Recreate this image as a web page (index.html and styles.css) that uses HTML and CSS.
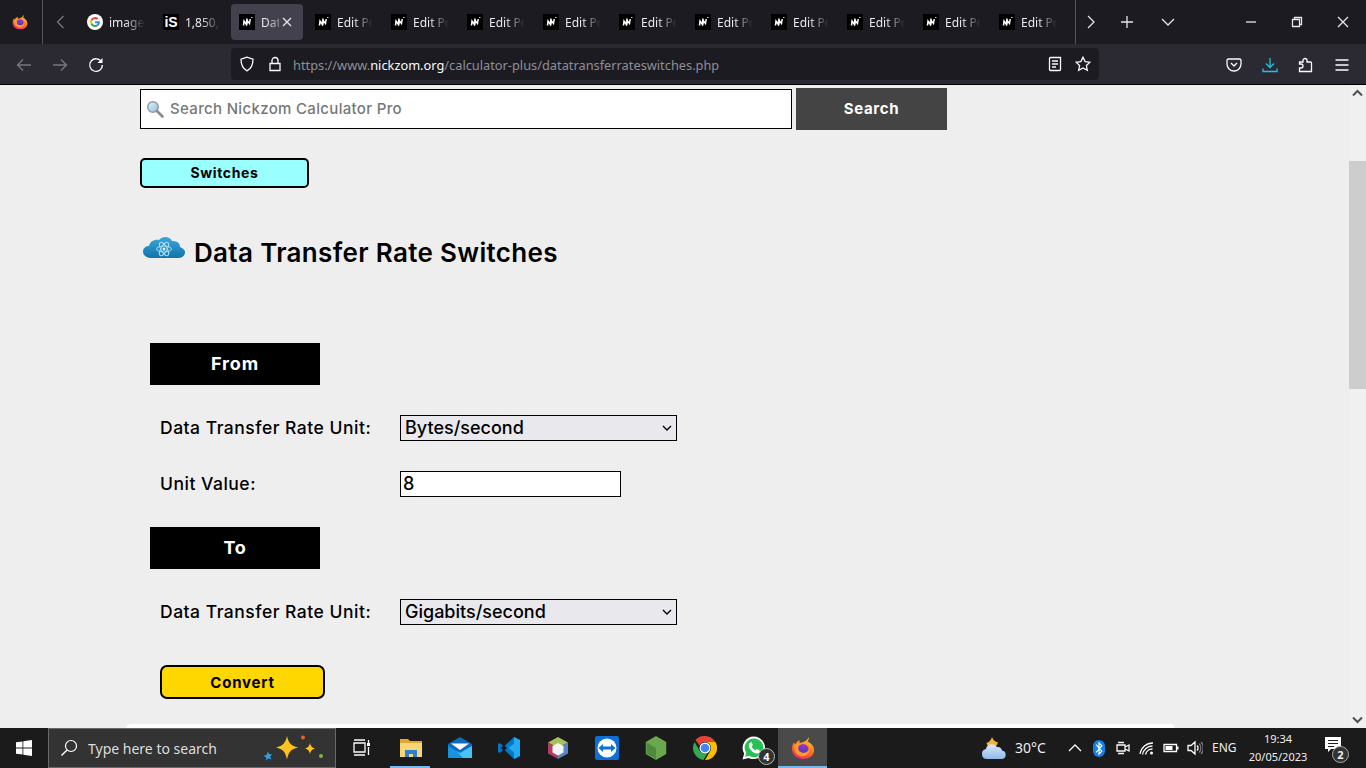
FILE: index.html
```html
<!DOCTYPE html>
<html lang="en">
<head>
<meta charset="utf-8">
<title>Data Transfer Rate Switches</title>
<link rel="stylesheet" href="styles.css">
</head>
<body>
<svg class="defs" aria-hidden="true">
  <defs>
    <linearGradient id="ffg" x1="0.7" y1="0" x2="0.3" y2="1"><stop offset="0" stop-color="#ffcb2e"/><stop offset="0.5" stop-color="#ff7a1f"/><stop offset="1" stop-color="#f2246b"/></linearGradient>
    <linearGradient id="ffp" x1="0.5" y1="0" x2="0.5" y2="1"><stop offset="0" stop-color="#8b3fd6"/><stop offset="1" stop-color="#5a2bb0"/></linearGradient>
    <linearGradient id="cloudg" x1="0" y1="0" x2="0" y2="1"><stop offset="0" stop-color="#3aa8dc"/><stop offset="1" stop-color="#1273ab"/></linearGradient>
    <linearGradient id="wxg" x1="0" y1="0" x2="0" y2="1"><stop offset="0" stop-color="#dbeafa"/><stop offset="1" stop-color="#8fb9ea"/></linearGradient>
    <linearGradient id="magg" x1="0" y1="0" x2="1" y2="1"><stop offset="0" stop-color="#e5f3fb"/><stop offset="1" stop-color="#8fbfdc"/></linearGradient>
    <symbol id="firefox" viewBox="0 0 24 24">
      <path fill="url(#ffg)" d="M17.500 1c.6 2.200-.1 3.600-1 4.600 3.300 1.200 6 4 6.500 7.400.8 5.700-3.900 10-10.800 10C5.700 23 1 18.600 1 12.600 1 10 1.900 7.700 3 6.300c.2 1.100.7 1.800 1.300 2.200C5 6.300 7 4.700 9 4.600c-.5.800-.7 1.500-.6 2.200C11 6.600 16.500 5.500 17.500 1z"/>
      <circle cx="12" cy="13.500" r="5.500" fill="url(#ffp)"/>
      <path fill="#ff9a2a" d="M3.500 9.500c2-2.300 5-3 7.500-1.500-2.200.3-3.500 1.500-3.800 3.500-.3 2.800 2 5.300 5.300 5.300 3 0 5.300-2 5.700-4.500 1 4.300-2.400 8.200-6.700 8.200-5 0-9.500-5-8-11z"/>
    </symbol>
    <symbol id="nz" viewBox="0 0 16 16">
      <rect width="16" height="16" fill="#000"/>
      <path fill="none" stroke="#fff" stroke-width="1.500" d="M4.500 11.500 5 7l2.200 3.200L8 4.500"/>
      <path fill="none" stroke="#fff" stroke-width="1.500" d="M7.500 11.500 8.500 7l2 2.500.7-4.500"/>
      <path fill="none" stroke="#ccc" stroke-width="1" d="M12 3.500h1.500"/>
    </symbol>
  </defs>
</svg>

<header class="chrome">
  <div class="tabbar">
    <div class="slot slot-ff"><svg class="i16"><use href="#firefox"/></svg></div>
    <div class="slot slot-back"><svg class="i16" viewBox="0 0 16 16"><path class="st dim" d="M10.500 2 4.500 8l6 6"/></svg></div>
    <div class="tabs">
      <div class="tab">
        <svg class="i16" viewBox="0 0 24 24"><circle cx="12" cy="12" r="12" fill="#fff"/><path fill="#ea4335" d="M12 7.500c1.100 0 2.100.4 2.900 1.100l2.100-2.100A7.500 7.500 0 0 0 5.300 8.700l2.500 1.900A4.500 4.500 0 0 1 12 7.500z"/><path fill="#fbbc05" d="M7.500 12c0-.5.100-.9.300-1.400L5.300 8.700a7.500 7.500 0 0 0 0 6.600l2.500-1.900c-.2-.5-.3-.9-.3-1.400z"/><path fill="#34a853" d="M12 16.500a4.500 4.500 0 0 1-4.200-3.100l-2.500 1.900A7.500 7.500 0 0 0 17 17.600l-2.400-1.900c-.7.500-1.600.8-2.600.8z"/><path fill="#4285f4" d="M19.300 10.800H12v3h4.200c-.3 1-.8 1.500-1.600 1.900l2.400 1.900c1.500-1.400 2.500-3.500 2.500-5.600 0-.4-.1-.8-.2-1.200z"/></svg>
        <span class="tab-t">image</span>
      </div>
      <div class="tab">
        <span class="is">iS</span>
        <span class="tab-t">1,850,5</span>
      </div>
      <div class="tab active">
        <svg class="i16"><use href="#nz"/></svg>
        <span class="tab-t short">Dat</span>
        <svg class="tab-x" viewBox="0 0 10 10"><path class="st" d="M1 1l8 8M9 1 1 9"/></svg>
      </div>
      <div class="tab"><svg class="i16"><use href="#nz"/></svg><span class="tab-t">Edit Po</span></div>
      <div class="tab"><svg class="i16"><use href="#nz"/></svg><span class="tab-t">Edit Po</span></div>
      <div class="tab"><svg class="i16"><use href="#nz"/></svg><span class="tab-t">Edit Po</span></div>
      <div class="tab"><svg class="i16"><use href="#nz"/></svg><span class="tab-t">Edit Po</span></div>
      <div class="tab"><svg class="i16"><use href="#nz"/></svg><span class="tab-t">Edit Po</span></div>
      <div class="tab"><svg class="i16"><use href="#nz"/></svg><span class="tab-t">Edit Po</span></div>
      <div class="tab"><svg class="i16"><use href="#nz"/></svg><span class="tab-t">Edit Po</span></div>
      <div class="tab"><svg class="i16"><use href="#nz"/></svg><span class="tab-t">Edit Po</span></div>
      <div class="tab"><svg class="i16"><use href="#nz"/></svg><span class="tab-t">Edit Po</span></div>
      <div class="tab"><svg class="i16"><use href="#nz"/></svg><span class="tab-t">Edit Po</span></div>
    </div>
    <div class="tab-end">
      <div class="slot w30"><svg class="i16" viewBox="0 0 16 16"><path class="st" d="M5 2l6 6-6 6"/></svg></div>
      <div class="slot w42"><svg class="i16" viewBox="0 0 16 16"><path class="st" d="M8 2v12M2 8h12"/></svg></div>
      <div class="slot w40"><svg class="i16" viewBox="0 0 16 16"><path class="st" d="M2 5l6 6 6-6"/></svg></div>
    </div>
    <div class="win">
      <div class="slot w46"><svg class="i12" viewBox="0 0 12 12"><path class="st" d="M1 6h10"/></svg></div>
      <div class="slot w46"><svg class="i12" viewBox="0 0 12 12"><path class="st" d="M1.500 3.500h7v7h-7zM3.500 3.500v-2h7v7h-2"/></svg></div>
      <div class="slot w46"><svg class="i12" viewBox="0 0 12 12"><path class="st" d="M1 1l10 10M11 1 1 11"/></svg></div>
    </div>
  </div>
  <div class="toolbar">
    <div class="slot w36 first"><svg class="i16" viewBox="0 0 16 16"><path class="st dim" d="M15 8H1.500M7 2.500 1.500 8 7 13.500"/></svg></div>
    <div class="slot w36"><svg class="i16" viewBox="0 0 16 16"><path class="st dim" d="M1 8h13.500M9 2.500 14.500 8 9 13.500"/></svg></div>
    <div class="slot w36"><svg class="i16" viewBox="0 0 16 16"><path class="st bright" d="M13.500 5A6.300 6.300 0 1 0 14.300 8"/><path fill="#fbfbfe" d="M14.500 1v5h-5z"/></svg></div>
    <div class="urlbar">
      <svg class="i16 shield" viewBox="0 0 16 16"><path class="st bright" d="M8 1.200 2 3.200c0 5.300 1.500 9.300 6 11.600 4.500-2.300 6-6.300 6-11.600z"/></svg>
      <svg class="i16 lock" viewBox="0 0 16 16"><path class="st bright" d="M3 7.500h10v7H3zM5 7.500V4.500a3 3 0 0 1 6 0v3"/></svg>
      <div class="url"><span class="url-dim">https://www.</span><span class="url-host">nickzom.org</span><span class="url-dim">/calculator-plus/datatransferrateswitches.php</span></div>
      <svg class="i16" viewBox="0 0 16 16"><path class="st bright" d="M3.500 1.500h10v12a1 1 0 0 1-1 1h-9a1 1 0 0 1-1-1v-11a1 1 0 0 1 1-1zM5 5h6M5 8h6M5 11h4"/></svg>
      <svg class="i16 star" viewBox="0 0 16 16"><path class="st bright" d="M8 1.200l2.100 4.400 4.800.6-3.500 3.300.9 4.800L8 12l-4.300 2.300.9-4.800L1.100 6.200l4.800-.6z"/></svg>
    </div>
    <div class="tools">
      <div class="slot w36"><svg class="i16" viewBox="0 0 16 16"><path class="st bright" d="M2.500 2h11A1.500 1.500 0 0 1 15 3.500V7A7 7 0 0 1 1 7V3.500A1.500 1.500 0 0 1 2.500 2zM5 6l3 3 3-3"/></svg></div>
      <div class="slot w36"><svg class="i16" viewBox="0 0 16 16"><path class="st blue" d="M8 1v9M4 6.500 8 10.500l4-4M1 11.500v3h14v-3"/></svg></div>
      <div class="slot w36"><svg class="i16" viewBox="0 0 16 16"><path class="st bright" d="M7 1.500a2 2 0 0 1 2 2V5h3.500a1 1 0 0 1 1 1v8.500h-12V11H3a2 2 0 0 0 0-4H1.500V5H5V3.500a2 2 0 0 1 2-2z"/></svg></div>
      <div class="slot w36"><svg class="i16" viewBox="0 0 16 16"><path class="st bright" d="M1.500 3h13M1.500 8h13M1.500 13h13"/></svg></div>
    </div>
  </div>
</header>

<div class="viewport">
  <main class="page">
    <form class="search-row">
      <div class="search-box">
        <svg class="mag" viewBox="0 0 18 18"><circle cx="7" cy="7" r="5.300" fill="url(#magg)" stroke="#8b9aa5" stroke-width="1.400"/><path d="M11 11l5.500 5.500" stroke="#8a8a8a" stroke-width="2.600" stroke-linecap="round"/></svg>
        <span class="search-ph">Search Nickzom Calculator Pro</span>
      </div>
      <div class="search-btn">Search</div>
    </form>
    <div class="switch-btn">Switches</div>
    <div class="title-row">
      <svg class="cloud" viewBox="0 0 42 30">
        <path fill="url(#cloudg)" d="M8 25C3 25 0 22 0 18.500S3 13 6 13c1-5 6-7 10-6 3-4 11-4 13 1 5 0 8 2 8 6 3 1 5 3 5 5 0 4-3 6-7 6z"/>
        <g fill="none" stroke="#a9dcf2" stroke-width="1"><ellipse cx="21" cy="16" rx="7.500" ry="3"/><ellipse cx="21" cy="16" rx="7.500" ry="3" transform="rotate(60 21 16)"/><ellipse cx="21" cy="16" rx="7.500" ry="3" transform="rotate(120 21 16)"/></g>
        <circle cx="21" cy="16" r="1.500" fill="#d5effa"/>
      </svg>
      <h1 class="title">Data Transfer Rate Switches</h1>
    </div>
    <div class="bar bar-from">From</div>
    <div class="field field-a">
      <label class="lbl" for="fromUnit">Data Transfer Rate Unit:</label>
      <select class="sel" id="fromUnit"><option>Bytes/second</option></select>
    </div>
    <div class="field field-b">
      <label class="lbl" for="val">Unit Value:</label>
      <input class="inp" id="val" type="text" value="8">
    </div>
    <div class="bar bar-to">To</div>
    <div class="field field-a">
      <label class="lbl" for="toUnit">Data Transfer Rate Unit:</label>
      <select class="sel" id="toUnit"><option>Gigabits/second</option></select>
    </div>
    <div class="convert">Convert</div>
    <div class="card"></div>
  </main>
  <aside class="scrollbar">
    <svg class="sb-arrow" viewBox="0 0 17 17"><path d="M4 10.500 8.500 6l4.500 4.500" fill="none" stroke="#505050" stroke-width="2"/></svg>
    <div class="sb-track"><div class="sb-thumb"></div></div>
    <svg class="sb-arrow" viewBox="0 0 17 17"><path d="M4 6.500 8.500 11 13 6.500" fill="none" stroke="#505050" stroke-width="2"/></svg>
  </aside>
</div>

<footer class="taskbar">
  <div class="tb-start"><svg class="i16" viewBox="0 0 16 16"><path fill="#fff" d="M0 2.300 6.500 1.400v6.200H0zM7.300 1.300 16 0v7.600H7.300zM0 8.400h6.500v6.200L0 13.700zM7.300 8.400H16V16l-8.700-1.300z"/></svg></div>
  <div class="tb-search">
    <svg class="tb-mag" viewBox="0 0 18 18"><circle cx="11" cy="7" r="5.500" fill="none" stroke="#fff" stroke-width="1.200"/><path d="M7 11l-5.500 5.500" stroke="#fff" stroke-width="1.400"/></svg>
    <span class="tb-search-t">Type here to search</span>
    <svg class="spark" viewBox="0 0 62 28">
      <path fill="#ffc21a" d="M24 2c1.500 7 4 10 11 11.500C28 15 25.500 18 24 25.500 22.500 18 20 15 13 13.500 20 12 22.500 9 24 2z"/>
      <path fill="#ffc21a" d="M47 9c.6 3 1.800 4.500 5 5.500-3.200 1-4.400 2.500-5 5.500-.6-3-1.800-4.500-5-5.500 3.200-1 4.400-2.500 5-5.500z"/>
      <circle cx="40" cy="3.500" r="2" fill="#e8622c"/>
      <circle cx="58" cy="22" r="2" fill="#7cb53a"/>
      <path fill="#2f9fe6" d="M5 17.500l1 2.800 3-.3-1.800 2.400 1.200 3-3-1-2.300 2 .2-3L.5 21.800l2.900-.8z"/>
    </svg>
  </div>
  <div class="tb-icons">
    <div class="tb-i tb-view"><svg class="i20" viewBox="0 0 20 20"><path class="st bright" d="M3 5h11v9H3zM3 2h11M3 17h11M17.500 2v3M17.500 9v8"/><rect x="16" y="5" width="3" height="3" fill="#fff"/></svg></div>
    <div class="tb-i on"><svg class="i24" viewBox="0 0 24 24"><path fill="#e3a72c" d="M1 3h8l2 2h12v5H1z"/><path fill="#f7d775" d="M1 7h22v14H1z"/><path fill="#2d7fd3" d="M6 21v-7h12v7h-4v-3h-4v3z"/></svg></div>
    <div class="tb-i"><svg class="i24" viewBox="0 0 24 24"><path fill="#0c6cc0" d="M12 1 24 8v4L12 19 0 12V8z"/><path fill="#fff" d="M3 7.500h18L12 14z"/><path fill="#1794e0" d="M0 10 12 17 24 10v11a1 1 0 0 1-1 1H1a1 1 0 0 1-1-1z"/><path fill="#45c4f5" d="M24 10v12h-9L8 14.700 12 17z"/></svg></div>
    <div class="tb-i"><svg class="i24" viewBox="0 0 24 24"><path fill="#0078c8" d="M17 1l6 3v16l-6 3-10-9.500L2.500 17 1 16v-8l1.500-1L7 10.500z"/><path fill="#23a9ee" d="M17 1l6 3v16l-6 3V16.500L11.500 12 17 7.500z"/><path fill="#1b1b1b" d="M7 9 3.500 12 7 15l3-3z"/></svg></div>
    <div class="tb-i"><svg class="i24" viewBox="0 0 24 24"><path fill="#a8c15a" d="M12 1l10 5.500L12 12 2 6.500z"/><path fill="#b23c64" d="M2 6.500 12 12v11L2 17.500z"/><path fill="#5586c7" d="M22 6.500 12 12v11l10-5.500z"/><path fill="#f4f4f4" d="M12 7l5.500 3v6.500L12 19.500 6.500 16.500V10z"/></svg></div>
    <div class="tb-i"><svg class="i24" viewBox="0 0 24 24"><rect width="24" height="24" rx="2" fill="#0e6fd8"/><circle cx="12" cy="12" r="9.500" fill="#fff"/><path fill="#0e6fd8" d="M3.500 12 8 8v2.500h8V8l4.500 4-4.500 4v-2.500H8V16z"/></svg></div>
    <div class="tb-i"><svg class="i24" viewBox="0 0 24 24"><path fill="#6aa84f" stroke="#6aa84f" stroke-linejoin="round" stroke-width="1.500" d="M12 1l9.500 5.500v11L12 23l-9.500-5.500v-11z"/><path fill="#4f8a3c" d="M12 23 2.500 17.500v-11L12 12z"/></svg></div>
    <div class="tb-i"><svg class="i24" viewBox="0 0 24 24"><path fill="#ea4335" d="M12 0a12 12 0 0 1 10.400 6H12a6 6 0 0 0-5.500 3.600L2.500 4A12 12 0 0 1 12 0z"/><path fill="#34a853" d="M1.600 6A12 12 0 0 0 10.500 23.900l4-6.900A6 6 0 0 1 6.500 14.500z"/><path fill="#fbbc05" d="M22.400 6H12a6 6 0 0 1 5.200 9L12 24A12 12 0 0 0 22.400 6z"/><circle cx="12" cy="12" r="5.500" fill="#fff"/><circle cx="12" cy="12" r="4.300" fill="#4285f4"/></svg></div>
    <div class="tb-i"><svg class="i24" viewBox="0 0 24 24"><path fill="#fff" d="M12 .5A11.300 11.300 0 0 0 2.200 17.500L.5 23.500l6.200-1.600A11.300 11.300 0 1 0 12 .5z"/><path fill="#25c152" d="M12 2.500a9.300 9.300 0 0 0-7.800 14.300l-1 3.900 4-1A9.300 9.300 0 1 0 12 2.500z"/><path fill="#fff" d="M8.500 6.500c-.5 0-1.700 1-1.700 3 0 3.500 4.500 8 8 8 2 0 3-1.200 3-2l-.2-1.300-2.800-1.300-1.200 1.400c-1.700-.5-3.500-2.300-4-4l1.300-1.200-1.200-2.800z"/></svg><span class="wa-badge">4</span></div>
    <div class="tb-i cur"><svg class="i24"><use href="#firefox"/></svg></div>
  </div>
  <div class="tray">
    <svg class="wx" viewBox="0 0 26 26"><path fill="#f4b43a" d="M11 2c1 3 3 5 6 5.500-1 3-3 5-6 5.500-3-.5-5-2.500-5.500-5C8 7.500 10 5 11 2z"/><path fill="url(#wxg)" d="M6 24a5 5 0 0 1-1-9.900A6 6 0 0 1 16 12a4.500 4.500 0 0 1 5 3.500 4.300 4.300 0 0 1 0 8.500z"/></svg>
    <span class="temp">30°C</span>
    <svg class="i16 caret" viewBox="0 0 16 16"><path class="st bright" d="M2 11l6-6 6 6"/></svg>
    <span class="bt"><svg viewBox="0 0 12 18"><path fill="none" stroke="#fff" stroke-width="1.200" d="M3 5l6 7-3 3V3l3 3-6 7"/></svg></span>
    <svg class="i16 tray-i tray-cam" viewBox="0 0 16 16"><path class="st bright" d="M2 5h8v6H2zM10 7l4-2v6l-4-2M3 2.500h6M3 13.500h6"/></svg>
    <svg class="i16 tray-i" viewBox="0 0 16 16"><path class="st bright" d="M1 14a13 13 0 0 1 13-11M3.500 14.500A10 10 0 0 1 13.500 6M6.500 14.500a7 7 0 0 1 7-5.500"/><circle cx="12.500" cy="13" r="1.500" fill="#fff"/></svg>
    <svg class="i16 tray-i" viewBox="0 0 16 16"><path class="st bright" d="M1 4.500h12.500v7H1z"/><rect x="2.500" y="6" width="7" height="4" fill="#fff"/><rect x="14" y="6.500" width="1.500" height="3" fill="#fff"/></svg>
    <svg class="i16 tray-i" viewBox="0 0 16 16"><path class="st bright" d="M1 5.500h3L8 2v12L4 10.500H1zM10 5.500a3.500 3.500 0 0 1 0 5"/><path class="st dim" d="M12 3.500a6.500 6.500 0 0 1 0 9M14 2a9 9 0 0 1 0 12"/></svg>
    <span class="eng">ENG</span>
    <div class="clock"><span>19:34</span><span>20/05/2023</span></div>
    <div class="notif">
      <svg class="i16" viewBox="0 0 16 16"><path fill="#fff" d="M0 0h16v12H6l-3 3v-3H0z"/><path stroke="#222" d="M3 3.500h10M3 6.500h10M3 9.500h6"/></svg>
      <span class="notif-b">2</span>
    </div>
  </div>
</footer>
</body>
</html>
```
FILE: styles.css
```css
* { box-sizing: border-box; }
html, body { margin: 0; height: 100%; overflow: hidden; }
body {
  width: 1366px; height: 768px; display: flex; flex-direction: column;
  font-family: "Inter", "Liberation Sans", sans-serif; background: #eee;
}
.defs { display: block; width: 0; height: 0; }
svg { display: block; flex: none; }
.st { fill: none; stroke: #e6e6ea; stroke-width: 1.300; }
.st.bright { stroke: #fbfbfe; }
.st.dim { stroke: #77767e; }
.st.blue { stroke: #1fc1f0; }
.i12 { width: 12px; height: 12px; }
.i16 { width: 16px; height: 16px; }
.i20 { width: 20px; height: 20px; }
.i24 { width: 24px; height: 24px; }
.slot { display: flex; align-items: center; justify-content: center; height: 100%; flex: none; }
.w30 { width: 30px; } .w36 { width: 36px; } .w40 { width: 40px; } .w42 { width: 42px; } .w46 { width: 46px; }

/* browser chrome */
.chrome { flex: none; height: 85px; background: #000; }
.tabbar { height: 44px; background: #1c1b22; display: flex; align-items: center; }
.slot-ff { width: 43px; padding-right: 2px; border-right: 1px solid #55545c; }
.slot-back { width: 36px; }
.tabs { display: flex; gap: 4px; width: 997px; height: 36px; overflow: hidden; flex: none; }
.tab { width: 72px; flex: none; height: 36px; display: flex; align-items: center; gap: 6px; padding-left: 8px; color: #e8e8ec; border-radius: 4px; font: 12px/16px "Noto Sans", "Open Sans", sans-serif; }
.tab.active { background: #42414d; }
.tab-t { flex: 1 1 0; min-width: 0; padding-top: 2px; white-space: nowrap; -webkit-mask-image: linear-gradient(90deg, #000 16px, transparent 36px); mask-image: linear-gradient(90deg, #000 16px, transparent 36px); }
.tab-t.short { flex: 0 0 18px; -webkit-mask-image: linear-gradient(90deg, #aaa 5px, rgba(0,0,0,.4) 18px); mask-image: linear-gradient(90deg, #aaa 5px, rgba(0,0,0,.4) 18px); }
.tab-x { width: 10px; height: 10px; flex: none; margin-left: -3px; }
.is { width: 16px; height: 16px; background: #000; color: #fff; font: 700 14px/16px "Liberation Sans", sans-serif; text-align: center; flex: none; }
.tab-end { display: flex; height: 44px; width: 153px; border-left: 1px solid #55545c; margin-left: -1px; flex: none; }
.win { display: flex; height: 44px; flex: none; }
.toolbar { height: 40px; padding-top: 1px; background: #2b2a33; display: flex; align-items: center; }
.first { margin-left: 6px; }
.urlbar { width: 868px; height: 32px; margin-left: 117px; margin-top: -1px; background: #1c1b22; border-radius: 4px; display: flex; align-items: center; padding: 0 8px; flex: none; }
.shield { margin-right: 12px; }
.lock { margin-right: 10px; }
.url { flex: 1; padding-top: 2px; font: 12.800px/20px "Noto Sans", "Open Sans", sans-serif; white-space: nowrap; overflow: hidden; }
.url-dim { color: #8f8f96; }
.url-host { color: #fbfbfe; }
.star { margin-left: 12px; }
.tools { display: flex; height: 39px; margin-left: 117px; }

/* page */
.viewport { flex: 1; min-height: 0; display: flex; background: #eee; }
.page { flex: 1; min-width: 0; padding-left: 140px; padding-top: 3px; overflow: hidden; }
.search-row { display: flex; align-items: center; gap: 4px; }
.search-box { width: 652px; height: 40px; border: 1.500px solid #000; background: #fff; display: flex; align-items: center; padding: 0 0 2px 5px; gap: 6px; }
.mag { width: 18px; height: 18px; margin-top: 2px; }
.search-ph { color: #777; font-size: 15px; font-weight: 500; letter-spacing: .33px; }
.search-btn { width: 151px; height: 42px; padding-bottom: 2px; background: #444; color: #fff; font-size: 15px; font-weight: 700; letter-spacing: .7px; display: flex; align-items: center; justify-content: center; }
.switch-btn { width: 169px; height: 30px; margin-top: 28px; padding-bottom: 2px; border: 2px solid #000; border-radius: 5px; background: #9ff; color: #000; font-size: 14px; font-weight: 700; letter-spacing: .6px; display: flex; align-items: center; justify-content: center; }
.title-row { display: flex; align-items: flex-start; gap: 9px; margin-top: 45px; padding-left: 3px; height: 35px; }
.cloud { width: 42px; height: 30px; }
.title { margin: 5px 0 0; font-size: 26px; font-weight: 600; color: #000; white-space: nowrap; line-height: 30px; letter-spacing: .33px; }
.bar { width: 170px; height: 42px; padding-bottom: 2px; margin-left: 10px; background: #000; color: #fff; font-size: 18px; font-weight: 700; letter-spacing: .8px; display: flex; align-items: center; justify-content: center; }
.bar-from { margin-top: 75px; }
.bar-to { margin-top: 30px; }
.field { display: flex; align-items: center; height: 26px; padding-left: 20px; color: #000; }
.field-a { margin-top: 30px; }
.field-b { margin-top: 30px; }
.lbl { width: 240px; padding-bottom: 2px; font-size: 17.500px; font-weight: 500; letter-spacing: .5px; white-space: nowrap; }
.sel { width: 277px; height: 26px; border: 1.500px solid #000; border-radius: 0; background: #e9e9ed url("data:image/svg+xml,%3Csvg xmlns='http://www.w3.org/2000/svg' width='10' height='10'%3E%3Cpath d='M1 3l4 4 4-4' fill='none' stroke='%23000' stroke-width='1.400'/%3E%3C/svg%3E") no-repeat right 4px center; -webkit-appearance: none; appearance: none; color: #000; font: 500 18px "Inter", sans-serif; padding: 0 0 2px 4px; }
.inp { width: 221px; height: 26px; border: 1.500px solid #000; border-radius: 0; background: #fff; color: #000; font: 500 18px "Inter", sans-serif; padding: 0 2px 2px; }
.convert { width: 165px; height: 34px; margin: 40px 0 0 20px; border: 2px solid #000; border-radius: 7px; background: #ffd700; color: #000; font-size: 15px; font-weight: 700; letter-spacing: .8px; display: flex; align-items: center; justify-content: center; }
.card { width: 1049px; height: 20px; margin: 25px 0 0 -14px; background: #fff; border-radius: 5px 5px 0 0; }

/* scrollbar */
.scrollbar { width: 17px; flex: none; background: #f0f0f0; display: flex; flex-direction: column; }
.sb-arrow { width: 17px; height: 17px; }
.sb-track { flex: 1; min-height: 0; padding-top: 59px; }
.sb-thumb { height: 228px; background: #cdcdcd; }

/* taskbar */
.taskbar { flex: none; height: 40px; background: #1b1b1b; display: flex; align-items: center; color: #fff; }
.tb-start { width: 48px; height: 40px; display: flex; align-items: center; justify-content: center; }
.tb-search { width: 288px; height: 40px; background: #333; border: 1px solid #6a6a6a; display: flex; align-items: center; padding-left: 11px; }
.tb-mag { width: 18px; height: 18px; }
.tb-search-t { font: 14px "Noto Sans", "Open Sans", sans-serif; color: #ddd; margin-left: 10px; white-space: nowrap; width: 176px; }
.spark { width: 62px; height: 28px; margin-left: -1px; }
.tb-icons { display: flex; height: 40px; margin-left: 1px; }
.tb-i { width: 49px; height: 40px; display: flex; align-items: center; justify-content: center; position: relative; }
.tb-view svg { margin-right: 2px; }
.tb-i.on::after { content: ""; position: absolute; left: 4px; bottom: 0; width: 40px; height: 2px; background: #76b9ed; }
.tb-i.cur { background: #4a4a4a; box-shadow: inset 0 -2px 0 #76b9ed; }
.wa-badge { position: absolute; right: 3px; bottom: 3px; width: 17px; height: 17px; border-radius: 50%; background: #333; border: 1px solid #bbb; font: 700 11px/15px "Noto Sans", sans-serif; text-align: center; }
.tray { display: flex; align-items: center; height: 40px; font: 12px/16px "Noto Sans", "Open Sans", sans-serif; color: #eee; margin-left: 154px; }
.wx { width: 26px; height: 26px; }
.temp { font-size: 14px; margin-left: 8px; width: 40px; }
.caret { margin-left: 12px; }
.bt { width: 12px; height: 17px; margin-left: 10px; background: #1481e6; border-radius: 6px; display: block; }
.bt svg { width: 12px; height: 17px; }
.tray-i { margin-left: 8px; }
.tray-cam { margin-left: 10px; }
.eng { margin-left: 9px; width: 30px; }
.clock { width: 76px; margin-left: -2px; display: flex; flex-direction: column; align-items: center; font-size: 11px; line-height: 18px; }
.notif { width: 24px; height: 22px; margin-left: 9px; position: relative; }
.notif-b { position: absolute; right: 0; bottom: -4px; width: 17px; height: 17px; border-radius: 50%; background: #333; border: 1px solid #aaa; font: 700 11px/15px "Noto Sans", sans-serif; text-align: center; color: #eee; }
```
